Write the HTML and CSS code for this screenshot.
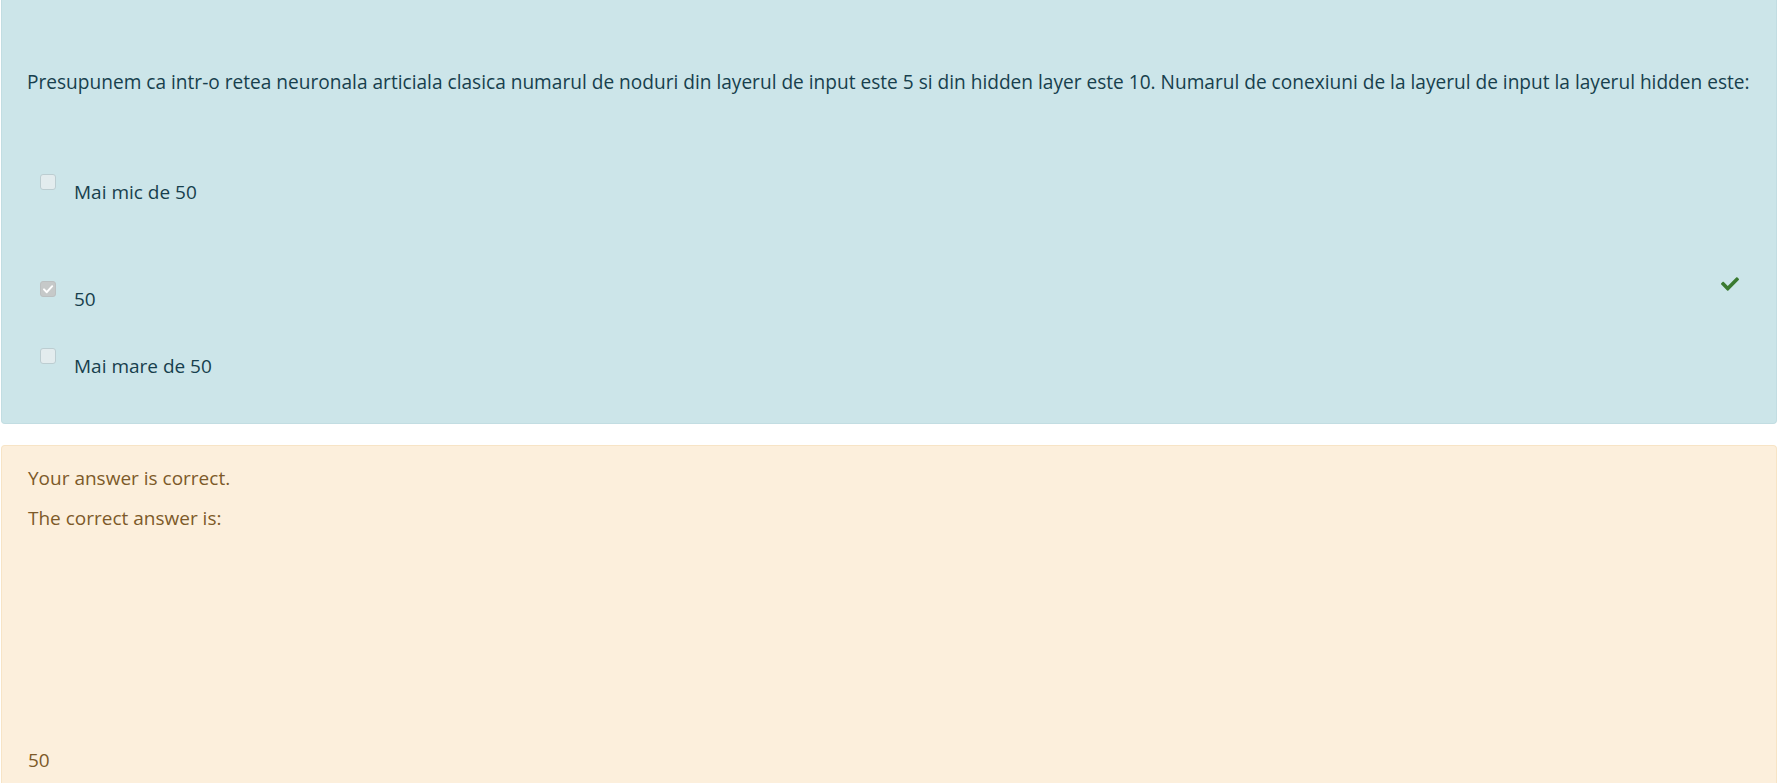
FILE: index.html
```html
<!DOCTYPE html>
<html lang="ro">
<head>
<meta charset="utf-8">
<title>Question</title>
<link rel="stylesheet" href="styles.css">
</head>
<body>
<div class="page">
  <div class="formulation">
    <p class="qtext">Presupunem ca intr-o retea neuronala articiala clasica numarul de noduri din layerul de input este 5 si din hidden layer este 10. Numarul de conexiuni de la layerul de input la layerul hidden este:</p>
    <div class="answers">
      <div class="option opt-first">
        <span class="box"></span>
        <span class="label">Mai mic de 50</span>
      </div>
      <div class="option opt-second">
        <span class="box checked">
          <svg viewBox="0 0 16 16" width="16" height="16"><path d="M4 8.4l2.8 2.8 5.4-6" fill="none" stroke="#ffffff" stroke-width="2" stroke-linecap="round" stroke-linejoin="round"/></svg>
        </span>
        <span class="label">50</span>
        <svg class="tick" viewBox="0 64 512 384" width="18" height="14"><path fill="#3a7a30" d="M173.898 439.404l-166.4-166.4c-9.997-9.997-9.997-26.206 0-36.204l36.203-36.204c9.997-9.998 26.207-9.998 36.204 0L192 312.69 432.095 72.596c9.997-9.997 26.207-9.997 36.204 0l36.203 36.204c9.997 9.997 9.997 26.206 0 36.204l-294.4 294.401c-9.998 9.997-26.207 9.997-36.204-.001z"/></svg>
      </div>
      <div class="option opt-third">
        <span class="box"></span>
        <span class="label">Mai mare de 50</span>
      </div>
    </div>
  </div>
  <div class="outcome">
    <p class="feedback">Your answer is correct.</p>
    <p class="feedback second">The correct answer is:</p>
    <p class="feedback answer">50</p>
  </div>
</div>
</body>
</html>
```
FILE: styles.css
```css
html, body {
  margin: 0;
  padding: 0;
  background: #ffffff;
}
body {
  font-family: "Open Sans", "Noto Sans", "Liberation Sans", sans-serif;
  font-size: 19px;
  line-height: 25px;
  overflow: hidden;
}
.page {
  padding: 0 7px 0 1px;
}
.formulation {
  background: #cce5e9;
  color: #173f4d;
  border: 1px solid #c2dde2;
  border-top: none;
  border-radius: 0 0 4px 4px;
  padding: 70px 25px 44px 25px;
}
.qtext {
  margin: 0;
  font-size: 19.1px;
  white-space: nowrap;
}
.answers {
  margin-top: 79px;
}
.option {
  display: flex;
  align-items: flex-start;
}
.opt-second { margin-top: 76px; }
.opt-third { margin-top: 36px; }
.box {
  width: 14px;
  height: 14px;
  margin-left: 13px;
  margin-right: 18px;
  border: 1px solid #bccdd1;
  border-radius: 3px;
  background: #e3ecee;
  flex: none;
  position: relative;
}
.box.checked {
  background: #c6c9c9;
  border-color: #bcc0c1;
}
.box svg {
  position: absolute;
  left: -1px;
  top: -1px;
}
.label {
  padding-top: 6px;
}
.tick {
  margin-left: auto;
  margin-right: 12px;
  margin-top: -4px;
}
.outcome {
  margin-top: 21px;
  background: #fcefdc;
  color: #7d5a29;
  border: 1px solid #f7e4c6;
  border-bottom: none;
  border-radius: 4px 4px 0 0;
  padding: 20px 25px 40px 26px;
}
.feedback {
  margin: 0;
}
.feedback.second {
  margin-top: 15px;
}
.feedback.answer {
  margin-top: 217px;
}
```
